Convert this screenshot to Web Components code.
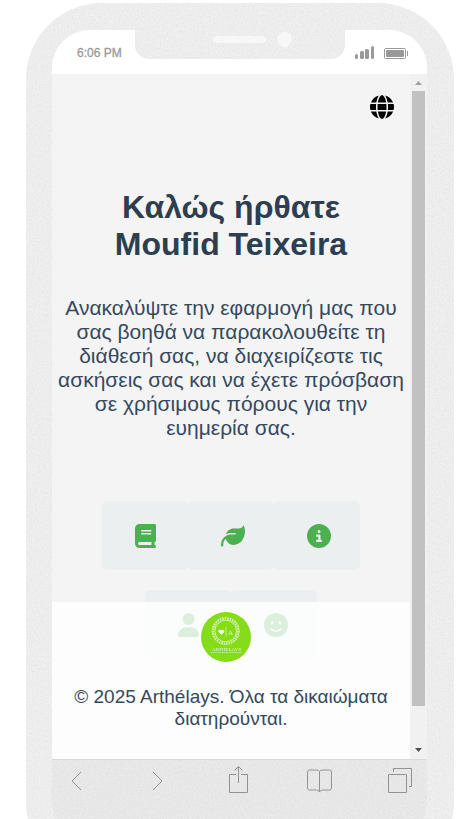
<!DOCTYPE html>
<html lang="el">
<head>
<meta charset="utf-8">
<meta name="viewport" content="width=device-width, initial-scale=1">
<title>Arthélays</title>
<style>
body { margin: 0; background: #fff; font-family: "Liberation Sans", Arial, sans-serif; }
</style>
</head>
<body>
<phone-frame>
  <status-bar slot="status">6:06 PM</status-bar>
  <app-view slot="view">
    <welcome-panel>
      <span slot="title">Καλώς ήρθατε Moufid Teixeira</span>
      Ανακαλύψτε την εφαρμογή μας που σας βοηθά να παρακολουθείτε τη διάθεσή σας, να διαχειρίζεστε τις ασκήσεις σας και να έχετε πρόσβαση σε χρήσιμους πόρους για την ευημερία σας.
    </welcome-panel>
    <tile-grid>
      <tile-link icon="book" label="Ημερολόγιο"></tile-link>
      <tile-link icon="leaf" label="Ασκήσεις"></tile-link>
      <tile-link icon="info" label="Πληροφορίες"></tile-link>
      <tile-link icon="user" label="Προφίλ"></tile-link>
      <tile-link icon="smile" label="Διάθεση"></tile-link>
    </tile-grid>
    <app-footer slot="footer">© 2025 Arthélays. Όλα τα δικαιώματα διατηρούνται.</app-footer>
  </app-view>
  <browser-bar slot="bar"></browser-bar>
</phone-frame>

<script>
const define = (name, html) => {
  const t = document.createElement('template');
  t.innerHTML = html;
  customElements.define(name, class extends HTMLElement {
    constructor() {
      super();
      this.attachShadow({ mode: 'open' }).append(t.content.cloneNode(true));
    }
  });
};

const ICONS = {
  globe: [512, 'M352 256c0 22.2-1.2 43.6-3.3 64H163.3c-2.2-20.4-3.3-41.8-3.3-64s1.2-43.6 3.3-64H348.7c2.2 20.4 3.3 41.8 3.3 64zm28.8-64H503.9c5.3 20.5 8.1 41.9 8.1 64s-2.8 43.5-8.1 64H380.8c2.1-20.6 3.2-42 3.2-64s-1.1-43.4-3.2-64zm112.6-32H376.7c-10-63.9-29.8-117.4-55.3-151.6c78.3 20.7 142 77.5 171.9 151.6zm-149.1 0H167.7c6.1-36.4 15.5-68.6 27-94.7c10.5-23.6 22.2-40.7 33.5-51.5C239.4 3.2 248.7 0 256 0s16.6 3.2 27.8 13.8c11.3 10.8 23 27.9 33.5 51.5c11.6 26 20.9 58.2 27 94.7zm-209 0H18.6C48.6 85.9 112.2 29.1 190.6 8.4C165.1 42.6 145.3 96.1 135.3 160zM8.1 192H131.2c-2.1 20.6-3.2 42-3.2 64s1.1 43.4 3.2 64H8.1C2.8 299.5 0 278.1 0 256s2.8-43.5 8.1-64zM194.7 446.6c-11.6-26-20.9-58.2-27-94.6H344.3c-6.1 36.4-15.5 68.6-27 94.6c-10.5 23.6-22.2 40.7-33.5 51.5C272.6 508.8 263.3 512 256 512s-16.6-3.2-27.8-13.8c-11.3-10.8-23-27.9-33.5-51.5zM135.3 352c10 63.9 29.8 117.4 55.3 151.6C112.2 482.9 48.6 426.1 18.6 352H135.3zm358.1 0c-30 74.1-93.6 130.9-171.9 151.6c25.5-34.2 45.2-87.7 55.3-151.6H493.4z'],
  book: [448, 'M96 0C43 0 0 43 0 96V416c0 53 43 96 96 96H384h32c17.7 0 32-14.3 32-32s-14.3-32-32-32V384c17.7 0 32-14.3 32-32V32c0-17.7-14.3-32-32-32H384 96zm0 384H352v64H96c-17.7 0-32-14.3-32-32s14.3-32 32-32zm32-240c0-8.8 7.2-16 16-16H336c8.8 0 16 7.2 16 16s-7.2 16-16 16H144c-8.8 0-16-7.2-16-16zm16 48H336c8.8 0 16 7.2 16 16s-7.2 16-16 16H144c-8.8 0-16-7.2-16-16s7.2-16 16-16z'],
  leaf: [512, 'M272 96c-78.6 0-145.1 51.5-167.7 122.5c33.6-17 71.5-26.5 111.7-26.5h88c8.8 0 16 7.2 16 16s-7.2 16-16 16H288 216s0 0 0 0c-16.6 0-32.7 1.9-48.3 5.4c-25.9 5.9-49.9 16.4-71.4 30.7c0 0 0 0 0 0C38.3 298.8 0 364.9 0 440v16c0 13.3 10.7 24 24 24s24-10.7 24-24V440c0-48.7 20.7-92.5 53.8-123.2C121.6 392.3 190.3 448 272 448l1 0c132.1-.7 239-130.9 239-291.4c0-42.6-7.5-83.1-21.1-119.6c-2.6-6.9-12.7-6.6-16.2-.1C455.9 72.1 418.7 96 376 96L272 96z'],
  info: [512, 'M256 512A256 256 0 1 0 256 0a256 256 0 1 0 0 512zM216 336h24V272H216c-13.3 0-24-10.7-24-24s10.7-24 24-24h48c13.3 0 24 10.7 24 24v88h8c13.3 0 24 10.7 24 24s-10.7 24-24 24H216c-13.3 0-24-10.7-24-24s10.7-24 24-24zm40-208a32 32 0 1 1 0 64 32 32 0 1 1 0-64z'],
  user: [448, 'M224 256A128 128 0 1 0 224 0a128 128 0 1 0 0 256zm-45.7 48C79.8 304 0 383.8 0 482.3C0 498.7 13.3 512 29.7 512H418.3c16.4 0 29.7-13.3 29.7-29.7C448 383.8 368.2 304 269.7 304H178.3z'],
  smile: [512, 'M256 512A256 256 0 1 0 256 0a256 256 0 1 0 0 512zM164.1 325.5C182 346.2 212.6 368 256 368s74-21.8 91.9-42.5c5.8-6.7 15.9-7.4 22.6-1.6s7.4 15.9 1.6 22.6C349.8 372.1 311.1 400 256 400s-93.8-27.9-116.1-53.5c-5.8-6.7-5.1-16.8 1.6-22.6s16.8-5.1 22.6 1.6zM144.4 208a32 32 0 1 1 64 0 32 32 0 1 1 -64 0zm192-32a32 32 0 1 1 0 64 32 32 0 1 1 0-64z']
};
const svgIcon = n => `<svg viewBox="0 0 ${ICONS[n][0]} 512" height="24" fill="currentColor" aria-hidden="true"><path d="${ICONS[n][1]}"/></svg>`;

/* Paper-like grain used on the bezel and the browser bar */
define('paper-grain', `
<style>
:host { position: absolute; inset: 0; pointer-events: none; }
svg { display: block; width: 100%; height: 100%; }
</style>
<svg aria-hidden="true"><filter id="g" x="0" y="0" width="100%" height="100%"><feTurbulence type="fractalNoise" baseFrequency="0.6" numOctaves="2" seed="4"/><feColorMatrix values="0 0 0 0 0.45  0 0 0 0 0.45  0 0 0 0 0.45  0.35 0 0 0 -0.14"/></filter><rect width="100%" height="100%" filter="url(#g)"/></svg>`);

define('phone-frame', `
<style>
:host { display: block; height: 100vh; overflow: hidden; box-sizing: border-box; padding: 3px 11px 0 26px; }
.body { position: relative; overflow: hidden; box-sizing: border-box; height: calc(100vh + 47px); padding: 27px 27px 27px 26px; border-radius: 68px 76px 66px 66px; border-top-left-radius: 76px; background: #efefef; }
.screen { position: relative; height: 100%; display: flex; flex-direction: column; border-radius: 38px; overflow: hidden; background: #fff; }
.notch { position: absolute; top: 0; left: 0; right: 0; display: flex; justify-content: center; pointer-events: none; }
.notch div { position: relative; overflow: hidden; box-sizing: border-box; width: 210px; height: 56px; display: flex; align-items: center; justify-content: flex-end; gap: 11px; border-radius: 0 0 14px 14px; background: #efefef; padding: 17px 53px 0 0; }
.speaker { width: 53px; height: 7px; border-radius: 4px; background: #f7f7f7; z-index: 1; }
.camera { width: 15px; height: 15px; border-radius: 50%; background: #f7f7f7; z-index: 1; }
</style>
<div class="body">
  <paper-grain></paper-grain>
  <div class="screen"><slot name="status"></slot><slot name="view"></slot><slot name="bar"></slot></div>
  <div class="notch"><div><paper-grain></paper-grain><span class="speaker"></span><span class="camera"></span></div></div>
</div>`);

define('status-bar', `
<style>
:host { flex: none; display: flex; align-items: center; justify-content: space-between; height: 44px; box-sizing: border-box; padding: 2px 19px 0 25px; background: #fff; color: #999; font-size: 12px; line-height: 16px; -webkit-text-stroke: 0.3px #999; }
svg { display: block; }
</style>
<slot></slot>
<svg width="54" height="14" fill="#999" aria-hidden="true">
  <rect x="1" y="8" width="3" height="5" rx="1.5"/><rect x="6" y="5" width="4" height="8" rx="1.5"/><rect x="11" y="3" width="4" height="10" rx="1.5"/><rect x="17" y="0" width="3" height="13" rx="1.5"/>
  <rect x="30.5" y="2.5" width="21" height="10" rx="1" fill="none" stroke="#999"/><rect x="32" y="4" width="18" height="7" rx="1"/><rect x="53" y="5" width="1" height="5"/>
</svg>`);

define('app-view', `
<style>
:host { flex: 1; min-height: 0; display: flex; position: relative; background: #f4f4f4; }
.page { position: relative; flex: 1; min-width: 0; overflow: hidden; }
.top { display: flex; justify-content: flex-end; padding: 21px 16px 0; }
button { display: block; border: 0; padding: 0; background: none; color: #000; }
svg { display: block; }
.foot { position: absolute; left: 0; right: 0; bottom: 0; }
.rail { display: flex; flex-direction: column; align-items: center; width: 17px; background: #f1f1f1; }
.rail svg { flex: none; }
.thumb { width: 13px; flex: 615; background: #c1c1c1; }
.rest { flex: 36; }
</style>
<div class="page">
  <div class="top"><button type="button" aria-label="Γλώσσα">${svgIcon('globe')}</button></div>
  <slot></slot>
  <div class="foot"><slot name="footer"></slot></div>
</div>
<div class="rail" aria-hidden="true">
  <svg width="17" height="17"><path d="M5 11h7l-3.5-4z" fill="#a3a3a3"/></svg>
  <div class="thumb"></div><div class="rest"></div>
  <svg width="17" height="17"><path d="M5 6h7l-3.5 4z" fill="#505050"/></svg>
</div>`);

define('welcome-panel', `
<style>
:host { display: block; padding: 70px 4px 61px; text-align: center; }
h1 { max-width: 300px; margin: 0 auto 33px; font-size: 32px; line-height: 37px; font-weight: 700; color: #2c3e50; }
p { margin: 0; font-size: 21px; line-height: 24px; color: #34495e; }
</style>
<h1><slot name="title"></slot></h1><p><slot></slot></p>`);

define('tile-grid', `
<style>
:host { display: flex; flex-wrap: wrap; justify-content: center; row-gap: 20px; max-width: 300px; margin: 0 auto; }
</style><slot></slot>`);

customElements.define('tile-link', class extends HTMLElement {
  constructor() {
    super();
    this.attachShadow({ mode: 'open' });
  }
  connectedCallback() {
    this.shadowRoot.innerHTML = `
<style>
:host { display: block; }
a { display: flex; align-items: center; box-sizing: border-box; width: 86px; height: 69px; padding-left: 33px; border-radius: 5px; background: #ebeff0; color: #4caf50; }
</style><a href="#${this.getAttribute('icon')}" aria-label="${this.getAttribute('label')}">${svgIcon(this.getAttribute('icon'))}</a>`;
  }
});

define('app-logo', `
<style>
:host { display: block; width: 50px; height: 50px; }
svg { display: block; }
</style>
<svg width="50" height="50" viewBox="0 0 50 50" role="img" aria-label="Arthélays">
  <circle cx="25" cy="25" r="25" fill="#85dc18"/>
  <g fill="none" stroke="#fff">
    <circle cx="24.700" cy="19" r="12.500" stroke-width="2.400" stroke-dasharray="1.600 .9" opacity=".6"/>
    <circle cx="24.700" cy="19" r="10.800" stroke-width=".8" opacity=".75"/>
    <circle cx="24.700" cy="19" r="13.800" stroke-width=".5" opacity=".6"/>
    <path d="M25 14.500v10" stroke-width=".7" opacity=".7"/>
    <path d="M10 40.500h31" stroke-width=".5" opacity=".7"/>
  </g>
  <path d="M20.300 22.800l-2.600-2.500c-1.500-1.600.9-3.800 2.600-1.900 1.700-1.900 4.100.3 2.600 1.900z" fill="#fff"/>
  <g fill="#fff" font-family="Liberation Serif, serif" text-anchor="middle">
    <text x="29.500" y="22.500" font-size="7" opacity=".75">A</text>
    <text x="25.500" y="38.500" font-size="5" opacity=".8">ARTHELAYS</text>
  </g>
</svg>`);

define('app-footer', `
<style>
:host { display: flex; flex-direction: column; align-items: center; box-sizing: border-box; padding: 10px 10px 29px; background: rgba(255,255,255,.8); text-align: center; color: #34495e; }
app-logo { margin-right: 10px; }
p { margin: 24px 0 0; font-size: 19px; line-height: 22px; }
</style><app-logo></app-logo><p><slot></slot></p>`);

define('browser-bar', `
<style>
:host { position: relative; flex: none; display: flex; align-items: flex-start; justify-content: space-between; height: 83px; box-sizing: border-box; padding: 5px 15px 0 12px; border-top: 1px solid #d9d9d9; background: #e9e9e9; }
button { border: 0; padding: 0; background: none; width: 24px; height: 30px; z-index: 1; }
svg { display: block; overflow: visible; fill: none; stroke: #929292; stroke-width: 1; }
</style>
<paper-grain></paper-grain>
<button type="button" aria-label="Back"><svg width="24" height="30"><path d="M17 7l-9 9 9 9"/></svg></button>
<button type="button" aria-label="Forward"><svg width="24" height="30"><path d="M8 7l9 9-9 9"/></svg></button>
<button type="button" aria-label="Share"><svg width="24" height="30"><path d="M10 9.500H3.500v18h18v-18H15M12.500 18V1.500M8.500 5.500l4-4 4 4"/></svg></button>
<button type="button" aria-label="Bookmarks"><svg width="24" height="30"><path d="M12.500 6.500q-1-1.500-3-1.500H2.500q-2 0-2 2v16q0 2 2 2h7q2 0 3 2 1-2 3-2h7q2 0 2-2V7q0-2-2-2h-7q-2 0-3 1.500zV27"/></svg></button>
<button type="button" aria-label="Tabs"><svg width="24" height="30"><path d="M.5 9.500h18v18H.5zM5.500 7V3.500h18v18H21"/></svg></button>`);
</script>
</body>
</html>
